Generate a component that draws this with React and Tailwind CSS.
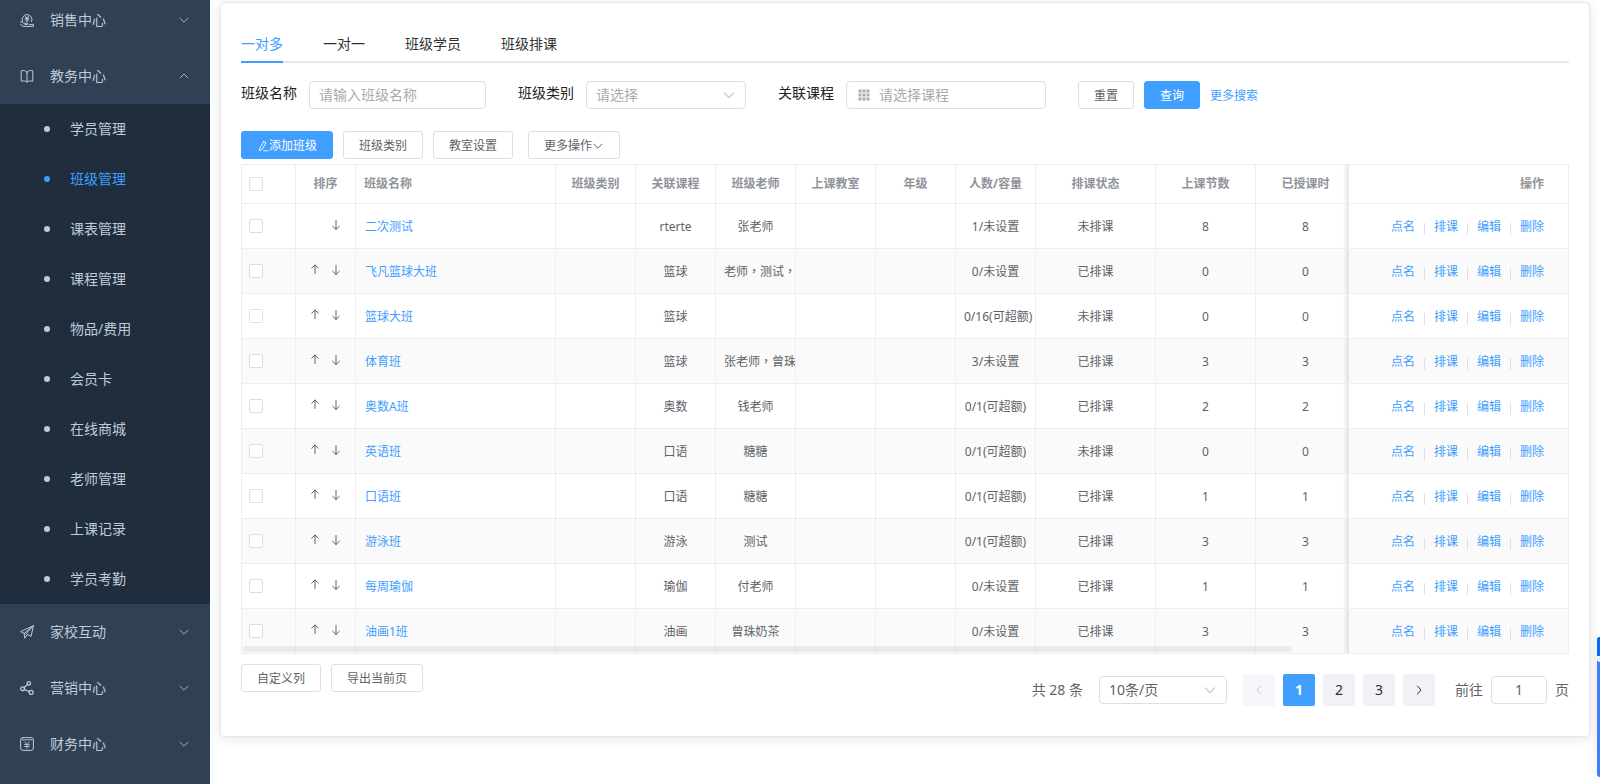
import React, { useState } from "react";

const Svg = ({ size = "size-3", box = "0 0 12 12", children }) => (
	<svg className={`${size} shrink-0`} viewBox={box} fill="none" stroke="currentColor" strokeLinecap="round" strokeLinejoin="round" aria-hidden="true">
		{children}
	</svg>
);

const ChevronDown = ({ size }) => (
	<Svg size={size}>
		<path d="M2 4.2 6 8.2l4-4" />
	</Svg>
);

const ChevronUp = () => (
	<Svg>
		<path d="M2 8 6 4l4 4" />
	</Svg>
);

const icons = {
	sales: (
		<Svg size="size-3.5" box="0 0 14 14">
			<path d="M2.4 8.4A5 5 0 1 1 11.6 8.6M5.300 3.2 7 5.2l1.700-2M5.200 5.400h3.600M5.200 7h3.600M7 5.200v3.600" />
			<path d="M.6 8.800c1.400 0 2 .6 3 1.400h3.600c1 0 1 1.300 0 1.300H5M.6 11.400l2.600 2h10.200v-2.200l-4 .6" />
		</Svg>
	),
	book: (
		<Svg size="size-3.5" box="0 0 14 14">
			<path d="M7 3.200V13M7 3.200C5.800 1.400 3 1.200 1.200 1.800v10.400c1.800-.4 4.400-.4 5.800.8 1.400-1.200 4-1.200 5.800-.8V1.800C11 1.200 8.200 1.400 7 3.200Z" />
		</Svg>
	),
	plane: (
		<Svg size="size-3.5" box="0 0 14 14">
			<path d="M13.300.8.7 6.600l3.500 1.900L13.300.8ZM13.300.8l-2.100 10.400-4-1.700M13.300.8 5.600 9.200M4.200 8.500l.5 4.700 2.100-3" />
		</Svg>
	),
	share: (
		<Svg size="size-3.5" box="0 0 14 14">
			<g strokeWidth="1.300">
				<circle cx="2.600" cy="7.800" r="1.900" />
				<circle cx="8.800" cy="2.400" r="1.700" />
				<circle cx="11.200" cy="11.400" r="2" />
				<path d="m4.100 6.600 3.500-3M4.400 8.500l4.900 2.200" />
			</g>
		</Svg>
	),
	finance: (
		<Svg size="size-3.5" box="0 0 14 14">
			<rect x=".6" y=".6" width="12.800" height="12.800" rx="2.400" />
			<path d="M2 2.800h10M4.800 5l2.200 2.500L9.200 5M4.600 7.600h4.800M4.600 9.500h4.800M7 7.600v3.900" strokeWidth="0.9" />
		</Svg>
	),
};

const PencilIcon = () => (
	<Svg>
		<path d="M6.800 1.600 9 2.800 5 9.400l-2.400 1.200.2-2.600 4-6.400ZM6.600 10.800h4.200" strokeWidth="0.9" />
	</Svg>
);

const ArrowUp = () => (
	<Svg>
		<path d="M6 9.500v-8.500M2.700 4.200 6 1l3.300 3.200" />
	</Svg>
);

const ArrowDown = () => (
	<Svg>
		<path d="M6 1.500v9M2.700 7.300 6 10.500l3.300-3.200" />
	</Svg>
);

const GridIcon = () => (
	<svg className="size-3 shrink-0" viewBox="0 0 12 12" fill="currentColor" aria-hidden="true">
		{[0, 4, 8].map((y) =>
			[0, 4, 8].map((x) => <rect key={`${x}-${y}`} x={x + 0.5} y={y + 0.5} width="3" height="3" />)
		)}
	</svg>
);

const eduItems = ["学员管理", "班级管理", "课表管理", "课程管理", "物品/费用", "会员卡", "在线商城", "老师管理", "上课记录", "学员考勤"];

const menus = [
	{ icon: "sales", name: "销售中心" },
	{ icon: "book", name: "教务中心", children: eduItems },
	{ icon: "plane", name: "家校互动" },
	{ icon: "share", name: "营销中心" },
	{ icon: "finance", name: "财务中心" },
];

const tabs = ["一对多", "一对一", "班级学员", "班级排课"];

const rows = [
	{ name: "二次测试", course: "rterte", teacher: "张老师", count: "1/未设置", status: "未排课", total: 8, done: 8 },
	{ name: "飞凡篮球大班", course: "篮球", teacher: "老师，测试，", count: "0/未设置", status: "已排课", total: 0, done: 0 },
	{ name: "篮球大班", course: "篮球", teacher: "", count: "0/16(可超额)", status: "未排课", total: 0, done: 0 },
	{ name: "体育班", course: "篮球", teacher: "张老师，曾珠", count: "3/未设置", status: "已排课", total: 3, done: 3 },
	{ name: "奥数A班", course: "奥数", teacher: "钱老师", count: "0/1(可超额)", status: "已排课", total: 2, done: 2 },
	{ name: "英语班", course: "口语", teacher: "糖糖", count: "0/1(可超额)", status: "未排课", total: 0, done: 0 },
	{ name: "口语班", course: "口语", teacher: "糖糖", count: "0/1(可超额)", status: "已排课", total: 1, done: 1 },
	{ name: "游泳班", course: "游泳", teacher: "测试", count: "0/1(可超额)", status: "已排课", total: 3, done: 3 },
	{ name: "每周瑜伽", course: "瑜伽", teacher: "付老师", count: "0/未设置", status: "已排课", total: 1, done: 1 },
	{ name: "油画1班", course: "油画", teacher: "曾珠奶茶", count: "0/未设置", status: "已排课", total: 3, done: 3 },
];

const btn = "h-7 rounded-[3px] border border-[#dcdfe6] bg-white pt-0.5 text-xs text-[#606266] flex items-center justify-center whitespace-nowrap";
const btnPrimary = "h-7 rounded-[3px] border border-[#409eff] bg-[#409eff] pt-0.5 text-xs text-white flex items-center justify-center whitespace-nowrap";
const field = "h-7 w-full rounded border border-[#dcdfe6] bg-white text-sm outline-none placeholder:text-[#a8abb2]";
const cell = "border-r border-b border-[#ebeef5] px-2 text-center whitespace-nowrap overflow-hidden";
const textCell = `${cell} pt-0.5`;
const fixedCell =
	"sticky right-0 border-r border-b border-[#ebeef5] pr-6 before:absolute before:inset-y-0 before:-left-1.5 before:w-1.5 before:bg-linear-to-l before:from-black/10 before:to-transparent";
const checkCell = "border-x border-b border-[#ebeef5] pl-[7px]";
const checkbox = "block size-3.5 appearance-none rounded-xs border border-[#dcdfe6] bg-white checked:bg-[#409eff]";

const Sidebar = () => {
	const [active, setActive] = useState("班级管理");

	return (
		<aside className="sticky top-0 h-screen w-[210px] shrink-0 overflow-hidden bg-[#304156] text-sm text-[#bfcbd9]">
			<nav className="-mt-2">
				{menus.map((menu) => (
					<div key={menu.name}>
						<button type="button" className="flex h-14 w-full items-center px-5">
							{icons[menu.icon]}
							<span className="ml-4">{menu.name}</span>
							<span className="ml-auto text-[#a4b1c0]">{menu.children ? <ChevronUp /> : <ChevronDown />}</span>
						</button>
						{menu.children && (
							<ul className="bg-[#1f2d3d]">
								{menu.children.map((item) => (
									<li key={item}>
										<a
											href="#"
											onClick={() => setActive(item)}
											className={`flex h-[50px] items-center gap-5 pl-11 ${item === active ? "text-[#409eff]" : ""}`}
										>
											<i className="size-1.5 rounded-full bg-current" />
											{item}
										</a>
									</li>
								))}
							</ul>
						)}
					</div>
				))}
			</nav>
		</aside>
	);
};

const Filters = () => (
	<form className="mt-[18px] flex items-start gap-8 text-sm text-[#222]" onSubmit={(e) => e.preventDefault()}>
		<div className="flex gap-3">
			<label htmlFor="className" className="leading-6">班级名称</label>
			<div className="w-[177px]">
				<input id="className" className={`${field} px-[9px] pb-0.5`} placeholder="请输入班级名称" />
			</div>
		</div>
		<div className="flex gap-3">
			<label htmlFor="classType" className="leading-6">班级类别</label>
			<div className="relative w-40">
				<select id="classType" className={`${field} appearance-none px-[9px] text-[#a8abb2]`}>
					<option>请选择</option>
				</select>
				<span className="pointer-events-none absolute inset-y-0 right-2.5 flex items-center text-[#c0c4cc]">
					<ChevronDown size="size-3.5" />
				</span>
			</div>
		</div>
		<div className="flex gap-3">
			<label htmlFor="course" className="leading-6">关联课程</label>
			<div className="relative w-[200px]">
				<span className="pointer-events-none absolute inset-y-0 left-3 flex items-center text-[#a8abb2]">
					<GridIcon />
				</span>
				<input id="course" className={`${field} pr-2.5 pb-0.5 pl-8`} placeholder="请选择课程" />
			</div>
		</div>
		<div className="flex items-center gap-2.5">
			<button type="reset" className={`${btn} w-14`}>重置</button>
			<button type="submit" className={`${btnPrimary} w-14`}>查询</button>
			<a href="#" className="pt-0.5 text-xs text-[#409eff]">更多搜索</a>
		</div>
	</form>
);

const ClassTable = () => (
	<div className="relative mt-[5px] border-t border-[#ebeef5]">
		<div className="overflow-hidden">
			<table className="w-[1684px] table-fixed border-separate border-spacing-0 text-xs text-[#606266]">
				<colgroup>
					<col className="w-[55px]" />
					<col className="w-[60px]" />
					<col className="w-[200px]" />
					<col className="w-20" />
					<col className="w-20" />
					<col className="w-20" />
					<col className="w-20" />
					<col className="w-20" />
					<col className="w-20" />
					<col className="w-[120px]" />
					<col className="w-[100px]" />
					<col className="w-[100px]" />
					<col />
					<col className="w-[220px]" />
				</colgroup>
				<thead className="text-[#909399]">
					<tr className="h-[39px]">
						<th className={checkCell}>
							<input type="checkbox" aria-label="全选" className={checkbox} />
						</th>
						<th className={cell}>排序</th>
						<th className={`${cell} text-left`}>班级名称</th>
						<th className={cell}>班级类别</th>
						<th className={cell}>关联课程</th>
						<th className={cell}>班级老师</th>
						<th className={cell}>上课教室</th>
						<th className={cell}>年级</th>
						<th className={cell}>人数/容量</th>
						<th className={cell}>排课状态</th>
						<th className={cell}>上课节数</th>
						<th className={cell}>已授课时</th>
						<th className={cell}></th>
						<th className={`${fixedCell} bg-white text-right`}>操作</th>
					</tr>
				</thead>
				<tbody>
					{rows.map((row, index) => (
						<tr key={row.name} className={`h-[45px] ${index % 2 ? "bg-[#fafafa]" : "bg-white"}`}>
							<td className={checkCell}>
								<input type="checkbox" aria-label={row.name} className={checkbox} />
							</td>
							<td className={cell}>
								<div className="flex justify-end gap-[9px] pr-[5px] pb-0.5">
									{index > 0 && <button type="button" aria-label="上移"><ArrowUp /></button>}
									<button type="button" aria-label="下移"><ArrowDown /></button>
								</div>
							</td>
							<td className={`${textCell} text-left`}>
								<a href="#" className="border border-transparent text-[#409eff]">{row.name}</a>
							</td>
							<td className={textCell}></td>
							<td className={textCell}>{row.course}</td>
							{/* this face keeps the full-width comma in the middle of its box */}
							<td lang="zh-TW" className={`${textCell} font-['Noto_Sans','Noto_Sans_CJK_TC',sans-serif]`}>{row.teacher}</td>
							<td className={textCell}></td>
							<td className={textCell}></td>
							<td className={textCell}>{row.count}</td>
							<td className={textCell}>{row.status}</td>
							<td className={textCell}>{row.total}</td>
							<td className={textCell}>{row.done}</td>
							<td className={textCell}></td>
							<td className={`${fixedCell} pt-0.5 ${index % 2 ? "bg-[#fafafa]" : "bg-white"}`}>
								<div className="flex items-center justify-end gap-[9px] text-[#409eff]">
									<a href="#">点名</a>
									<i className="mt-1 h-3 w-px bg-[#dcdfe6]" />
									<a href="#">排课</a>
									<i className="mt-1 h-3 w-px bg-[#dcdfe6]" />
									<a href="#">编辑</a>
									<i className="mt-1 h-3 w-px bg-[#dcdfe6]" />
									<a href="#">删除</a>
								</div>
							</td>
						</tr>
					))}
				</tbody>
			</table>
		</div>
		{/* horizontal scroll thumb */}
		<div className="absolute bottom-0.5 left-0.5 h-1.5 w-[79%] rounded-full bg-[#909399]/15" />
	</div>
);

const pageBtn = "flex size-8 items-center justify-center rounded-xs";

const Pagination = () => (
	<div className="flex items-center pt-2.5 text-sm text-[#606266]">
		<span className="mr-4">共 28 条</span>
		<div className="relative mr-4 w-32">
			<select aria-label="每页条数" className={`${field} appearance-none px-[9px]`}>
				<option>10条/页</option>
			</select>
			<span className="pointer-events-none absolute inset-y-0 right-2.5 flex items-center text-[#c0c4cc]">
				<ChevronDown size="size-3.5" />
			</span>
		</div>
		<div className="flex gap-2 text-[#303133]">
			<button type="button" disabled aria-label="上一页" className={`${pageBtn} bg-[#f5f7fa] text-[#c0c4cc]`}>
				<Svg><path d="M7.500 2 4 6l3.500 4" /></Svg>
			</button>
			<button type="button" className={`${pageBtn} bg-[#409eff] font-bold text-white`}>1</button>
			<button type="button" className={`${pageBtn} bg-[#f0f2f5]`}>2</button>
			<button type="button" className={`${pageBtn} bg-[#f0f2f5]`}>3</button>
			<button type="button" aria-label="下一页" className={`${pageBtn} bg-[#f0f2f5]`}>
				<Svg><path d="M4.500 2 8 6l-3.500 4" /></Svg>
			</button>
		</div>
		<label htmlFor="jumper" className="ml-5">前往</label>
		<div className="mx-2 w-14">
			<input id="jumper" defaultValue="1" className={`${field} px-1 pb-0.5 text-center`} />
		</div>
		<span>页</span>
	</div>
);

const App = () => {
	const [tab, setTab] = useState("一对多");

	return (
		<div lang="zh-CN" className="flex min-h-screen bg-white font-['Noto_Sans','Noto_Sans_CJK_SC',sans-serif]">
			<Sidebar />

			<main className="min-w-0 flex-1 px-2.5 pt-0.5 pb-12">
				<section className="rounded border border-[#e4e7ed] bg-white px-5 pt-5 pb-[30px] shadow-[0_2px_12px_rgba(0,0,0,0.1)]">
					{/* TABS */}
					<div className="flex h-10 gap-10 text-sm text-[#303133] shadow-[inset_0_-2px_0_#e4e7ed]">
						{tabs.map((name) => (
							<button
								key={name}
								type="button"
								onClick={() => setTab(name)}
								className={`border-b-2 pt-1 ${name === tab ? "border-[#409eff] text-[#409eff]" : "border-transparent"}`}
							>
								{name}
							</button>
						))}
					</div>

					<Filters />

					{/* ACTIONS */}
					<div className="mt-[22px] flex gap-2.5">
						<button type="button" className={`${btnPrimary} px-[15px]`}><PencilIcon />添加班级</button>
						<button type="button" className={`${btn} px-[15px]`}>班级类别</button>
						<button type="button" className={`${btn} px-[15px]`}>教室设置</button>
						<button type="button" className={`${btn} ml-[5px] px-[15px]`}>更多操作<ChevronDown /></button>
					</div>

					<ClassTable />

					{/* FOOTER */}
					<div className="flex items-start justify-between pt-2.5">
						<div className="flex gap-2.5">
							<button type="button" className={`${btn} px-[15px]`}>自定义列</button>
							<button type="button" className={`${btn} px-[15px]`}>导出当前页</button>
						</div>
						<Pagination />
					</div>
				</section>
			</main>

			{/* service drawer handle */}
			<div className="fixed right-0 bottom-[7px] flex h-[140px] w-[3px] flex-col overflow-hidden rounded-l bg-[#3d7fff] shadow-[0_0_8px_rgba(0,0,0,0.15)]">
				<i className="h-[19px] bg-[#0a68ff]" />
				<i className="h-1.5 rounded-bl-full bg-[#e8f0ff]" />
			</div>
		</div>
	);
};

export default App;
